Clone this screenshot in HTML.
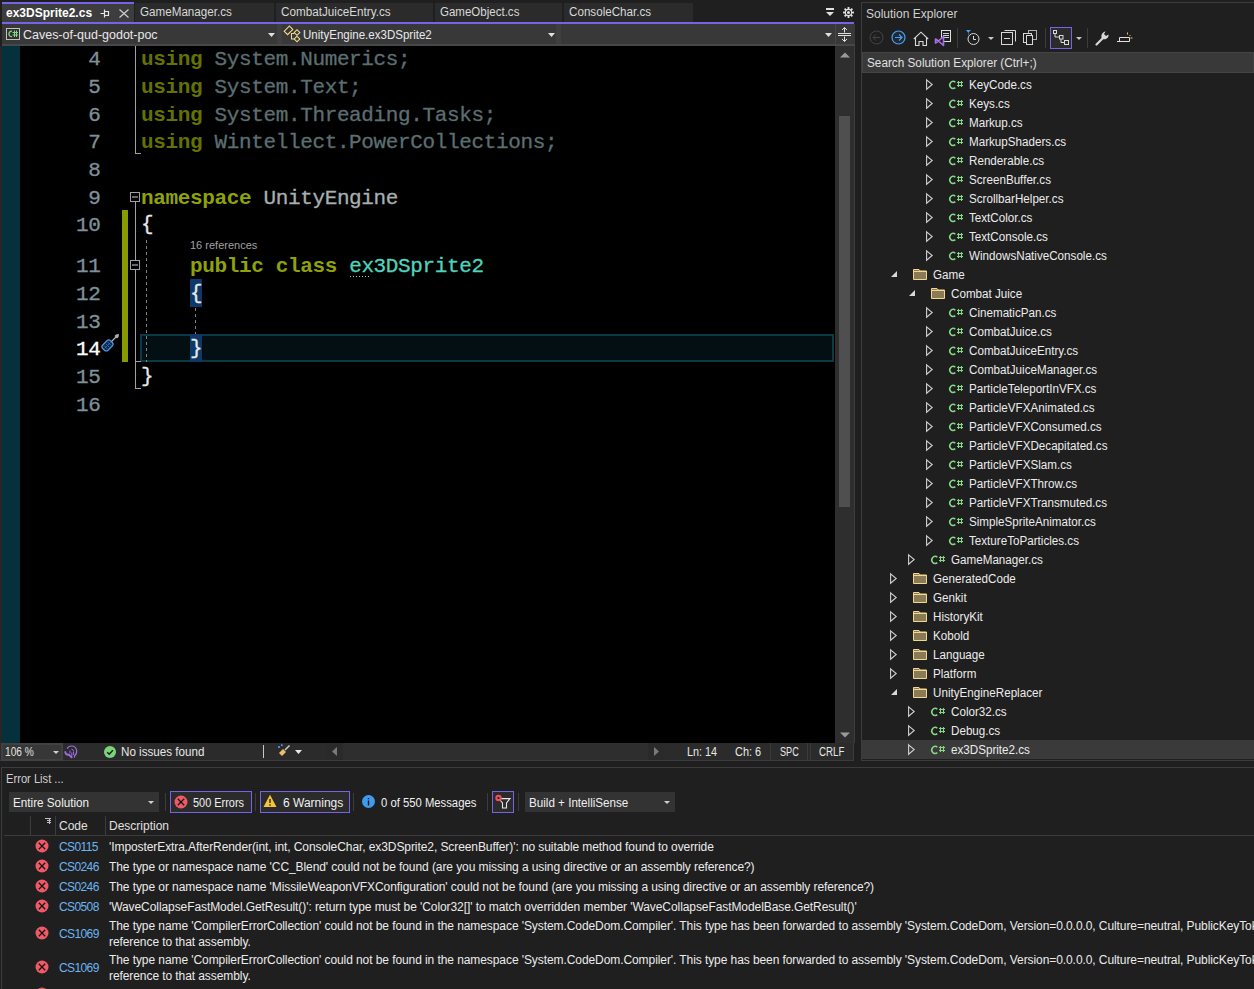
<!DOCTYPE html>
<html><head><meta charset="utf-8"><style>
*{margin:0;padding:0;box-sizing:border-box}
html,body{width:1254px;height:989px;overflow:hidden}
body{background:#1f1f1f;position:relative;font-family:"Liberation Sans",sans-serif;font-size:12px;color:#dcdcdc}
.a{position:absolute}
.t{position:absolute;white-space:pre;line-height:14px}
.code{position:absolute;-webkit-text-stroke:0.3px currentColor;white-space:pre;font-family:"Liberation Mono",monospace;font-size:21px;letter-spacing:-0.36px;line-height:27.67px;height:27.67px}
.ln{position:absolute;-webkit-text-stroke:0.3px currentColor;white-space:pre;font-family:"Liberation Mono",monospace;font-size:21px;letter-spacing:-0.36px;line-height:27.67px;text-align:right;width:50px;color:#7f9099}
.kw{color:#8fa20a;font-weight:bold;-webkit-text-stroke:0}
.kwf{color:#647200;font-weight:bold;-webkit-text-stroke:0}
.idf{color:#5b6f72}
.cls{color:#4fd4bd}
.br{color:#e8e8e8;position:relative;top:-1px}
.se{position:absolute;white-space:pre;color:#ececec;line-height:19px;height:19px;transform:scaleX(0.97);transform-origin:0 0}
svg{position:absolute;overflow:visible}
</style></head><body>
<div class="a" style="left:0;top:0;width:858px;height:22px;background:#1f1f1f"></div>
<div class="a" style="left:2px;top:2px;width:132px;height:20px;background:#3d3d3d;border-top:2px solid #7563e8"></div>
<div class="t" style="left:6px;top:6px;font-weight:bold;color:#ffffff">ex3DSprite2.cs</div>
<svg style="left:100px;top:9px" width="10" height="9" viewBox="0 0 10 9"><path d="M0.5 4.5H4.5M4.5 0.5V8.5M4.5 2.5H8.5V6.5H4.5" fill="none" stroke="#e8e8e8" stroke-width="1.2"/></svg>
<svg style="left:119px;top:8.5px" width="10" height="9" viewBox="0 0 10 9"><path d="M0.5 0.5L9.5 8.5M9.5 0.5L0.5 8.5" fill="none" stroke="#d0d0d0" stroke-width="1.2"/></svg>
<div class="a" style="left:135px;top:3px;width:139px;height:19px;background:#2b2b2b"></div>
<div class="t" style="left:140px;top:5px;color:#d8d8d8;transform:scaleX(0.97);transform-origin:0 0">GameManager.cs</div>
<div class="a" style="left:276px;top:3px;width:157px;height:19px;background:#2b2b2b"></div>
<div class="t" style="left:281px;top:5px;color:#d8d8d8;transform:scaleX(0.975);transform-origin:0 0">CombatJuiceEntry.cs</div>
<div class="a" style="left:435px;top:3px;width:127px;height:19px;background:#2b2b2b"></div>
<div class="t" style="left:440px;top:5px;color:#d8d8d8;transform:scaleX(0.96);transform-origin:0 0">GameObject.cs</div>
<div class="a" style="left:564px;top:3px;width:129px;height:19px;background:#2b2b2b"></div>
<div class="t" style="left:569px;top:5px;color:#d8d8d8;transform:scaleX(0.97);transform-origin:0 0">ConsoleChar.cs</div>
<svg style="left:825px;top:7px" width="11" height="11" viewBox="0 0 11 11"><rect x="1" y="1" width="8" height="2" fill="#e0e0e0"/><path d="M1 5H9L5 9Z" fill="#e0e0e0"/></svg>
<svg style="left:843px;top:7px" width="11" height="11" viewBox="0 0 12 12"><g fill="#e0e0e0"><circle cx="6" cy="6" r="4"/><rect x="5" y="0" width="2" height="12"/><rect x="0" y="5" width="12" height="2"/><rect x="5" y="0" width="2" height="12" transform="rotate(45 6 6)"/><rect x="5" y="0" width="2" height="12" transform="rotate(-45 6 6)"/></g><circle cx="6" cy="6" r="2.2" fill="none" stroke="#1f1f1f" stroke-width="1.1"/></svg>
<div class="a" style="left:2px;top:22px;width:852px;height:2px;background:#7563e8"></div>
<div class="a" style="left:0;top:24px;width:858px;height:22px;background:#1f1f1f"></div>
<div class="a" style="left:2px;top:24px;width:853px;height:22px;background:#383838;border-bottom:2px solid #474747"></div>
<div class="a" style="left:277px;top:24px;width:5px;height:20px;background:#3f3f3f"></div>
<div class="a" style="left:556px;top:24px;width:5px;height:20px;background:#3f3f3f"></div>
<div class="a" style="left:835px;top:24px;width:1px;height:20px;background:#474747"></div>
<svg style="left:6px;top:28px" width="14" height="12" viewBox="0 0 14 12"><rect x="0.5" y="0.5" width="13" height="11" fill="#303030" stroke="#c0c0c0" stroke-width="1"/><path d="M6 3.2A2.4 2.8 0 1 0 6 8.6" fill="none" stroke="#86d886" stroke-width="1.3"/><path d="M6.5 4.5H12M6.5 7H12M8.5 2.5V9M10.5 2.5V9" stroke="#86d886" stroke-width="1"/></svg>
<div class="t" style="left:23px;top:28px;color:#e8e8e8;transform:scaleX(1.04);transform-origin:0 0">Caves-of-qud-godot-poc</div>
<svg style="left:268px;top:33px" width="7" height="4" viewBox="0 0 7 4"><path d="M0 0H7L3.5 4Z" fill="#e0e0e0"/></svg>
<svg style="left:282px;top:24px" width="18" height="20" viewBox="0 0 18 20"><g fill="none" stroke="#f0d890" stroke-width="1.1"><g transform="rotate(-45 6.5 6.3)"><rect x="2.8" y="3.9" width="7.4" height="4.8" fill="#3a3636"/></g><g transform="rotate(45 15 8.5)"><rect x="13" y="6.5" width="4" height="4"/></g><g transform="rotate(45 15 15)"><rect x="13" y="13" width="4" height="4"/></g><path d="M9.5 9V15H12.3M9.5 9.5H12.3"/></g></svg>
<div class="t" style="left:303px;top:28px;color:#e8e8e8;transform:scaleX(0.96);transform-origin:0 0">UnityEngine.ex3DSprite2</div>
<svg style="left:548px;top:33px" width="7" height="4" viewBox="0 0 7 4"><path d="M0 0H7L3.5 4Z" fill="#e0e0e0"/></svg>
<svg style="left:825px;top:33px" width="7" height="4" viewBox="0 0 7 4"><path d="M0 0H7L3.5 4Z" fill="#e0e0e0"/></svg>
<svg style="left:838px;top:27px" width="13" height="15" viewBox="0 0 13 15"><g fill="none" stroke="#e0e0e0" stroke-width="1"><path d="M0 6.5H13M0 8.5H13M6.5 0.5V5.5M6.5 9.5V14.5M4 3L6.5 0.5L9 3M4 12L6.5 14.5L9 12"/></g></svg>
<div class="a" style="left:0;top:46px;width:835px;height:697px;background:#000000"></div>
<div class="a" style="left:0;top:46px;width:2px;height:697px;background:#262626"></div>
<div class="a" style="left:2px;top:46px;width:18px;height:697px;background:#05313d"></div>
<div class="a" style="left:122px;top:210.22px;width:6px;height:151.78px;background:#879a00"></div>
<div class="a" style="left:140px;top:334px;width:694px;height:28px;background:#040f13;border:2px solid #0b3a46"></div>
<div class="a" style="left:190px;top:279px;width:12px;height:27.5px;background:#0e3868"></div>
<div class="a" style="left:190px;top:334.20px;width:12px;height:27.67px;background:#0e3868"></div>
<svg style="left:130px;top:192px" width="10" height="10" viewBox="0 0 10 10"><rect x="0.5" y="0.5" width="9" height="9" fill="#000" stroke="#a0a0a0" stroke-width="1"/><path d="M2 5H8" stroke="#d0d0d0" stroke-width="1"/></svg>
<div class="a" style="left:135px;top:202px;width:1px;height:187px;background:#a0a0a0"></div>
<div class="a" style="left:135px;top:388px;width:6px;height:1px;background:#a0a0a0"></div>
<svg style="left:130px;top:260px" width="10" height="10" viewBox="0 0 10 10"><rect x="0.5" y="0.5" width="9" height="9" fill="#000" stroke="#a0a0a0" stroke-width="1"/><path d="M2 5H8" stroke="#d0d0d0" stroke-width="1"/></svg>
<div class="a" style="left:135px;top:361px;width:6px;height:1px;background:#a0a0a0"></div>
<div class="a" style="left:135px;top:46px;width:1px;height:108px;background:#a0a0a0"></div>
<div class="a" style="left:135px;top:153px;width:6px;height:1px;background:#a0a0a0"></div>
<div class="a" style="left:146px;top:240px;width:1px;height:122px;background:repeating-linear-gradient(#808080 0 3px,transparent 3px 6px)"></div>
<div class="a" style="left:195px;top:308px;width:1px;height:26px;background:repeating-linear-gradient(#808080 0 3px,transparent 3px 6px)"></div>
<div class="ln" style="left:50.5px;top:46.30px;color:#7f9099">4</div>
<div class="code" style="left:141px;top:46.30px"><span class="kwf">using</span><span class="idf"> System.Numerics;</span></div>
<div class="ln" style="left:50.5px;top:73.97px;color:#7f9099">5</div>
<div class="code" style="left:141px;top:73.97px"><span class="kwf">using</span><span class="idf"> System.Text;</span></div>
<div class="ln" style="left:50.5px;top:101.64px;color:#7f9099">6</div>
<div class="code" style="left:141px;top:101.64px"><span class="kwf">using</span><span class="idf"> System.Threading.Tasks;</span></div>
<div class="ln" style="left:50.5px;top:129.31px;color:#7f9099">7</div>
<div class="code" style="left:141px;top:129.31px"><span class="kwf">using</span><span class="idf"> Wintellect.PowerCollections;</span></div>
<div class="ln" style="left:50.5px;top:156.98px;color:#7f9099">8</div>
<div class="ln" style="left:50.5px;top:184.65px;color:#7f9099">9</div>
<div class="code" style="left:141px;top:184.65px"><span class="kw">namespace</span><span style="color:#a6b0b0"> UnityEngine</span></div>
<div class="ln" style="left:50.5px;top:212.32px;color:#7f9099">10</div>
<div class="code" style="left:141px;top:212.32px"><span class="br">{</span></div>
<div class="ln" style="left:50.5px;top:253.29px;color:#7f9099">11</div>
<div class="code" style="left:141px;top:253.29px">    <span class="kw">public</span> <span class="kw">class</span> <span class="cls">ex3DSprite2</span></div>
<div class="ln" style="left:50.5px;top:280.96px;color:#7f9099">12</div>
<div class="code" style="left:141px;top:280.96px">    <span class="br">{</span></div>
<div class="ln" style="left:50.5px;top:308.63px;color:#7f9099">13</div>
<div class="ln" style="left:50.5px;top:336.30px;color:#ffffff">14</div>
<div class="code" style="left:141px;top:336.30px">    <span class="br">}</span></div>
<div class="ln" style="left:50.5px;top:363.97px;color:#7f9099">15</div>
<div class="code" style="left:141px;top:363.97px"><span class="br">}</span></div>
<div class="ln" style="left:50.5px;top:391.64px;color:#7f9099">16</div>
<div class="t" style="left:190px;top:238px;font-size:11px;color:#a0a0a0">16 references</div>
<div class="a" style="left:350px;top:276px;width:20px;height:1px;background:repeating-linear-gradient(90deg,#c0c0c0 0 1px,transparent 1px 3px)"></div>
<svg style="left:100px;top:332px" width="21" height="21" viewBox="0 0 21 21"><path d="M11 10L17 4" stroke="#b0b0b0" stroke-width="1.3"/><path d="M16 2.5L19 2L18.5 5L17 6.5L14.5 4Z" fill="#b0b0b0"/><g transform="rotate(-45 7.5 13.5)"><rect x="2" y="9.8" width="11" height="7.4" rx="2.5" fill="#0c2440" stroke="#4f98e8" stroke-width="1.2"/><path d="M5 11V16M7.5 11V16M10 11V16M3.5 13.5H12" stroke="#2f6fb8" stroke-width="0.8"/></g></svg>
<div class="a" style="left:835px;top:46px;width:20px;height:697px;background:#2e2e2e;border-right:1px solid #3d3d3d"></div>
<svg style="left:840px;top:51.5px" width="10" height="6" viewBox="0 0 10 6"><path d="M0 5.5L5 0.5L10 5.5Z" fill="#9a9a9a"/></svg>
<svg style="left:840px;top:732px" width="10" height="6" viewBox="0 0 10 6"><path d="M0 0.5L5 5.5L10 0.5Z" fill="#9a9a9a"/></svg>
<div class="a" style="left:839px;top:116px;width:11px;height:391px;background:#4f4f4f"></div>
<div class="a" style="left:0;top:743px;width:854px;height:18px;background:#2b2b2b;border-bottom:1px solid #3b3b3b"></div>
<div class="a" style="left:1px;top:743px;width:62px;height:18px;background:#373737;border:2px solid #414141"></div>
<div class="t" style="left:5px;top:745px;color:#e0e0e0;transform:scaleX(0.85);transform-origin:0 0">106 %</div>
<svg style="left:53px;top:751px" width="6" height="3" viewBox="0 0 6 3"><path d="M0 0H6L3 3Z" fill="#d0d0d0"/></svg>
<svg style="left:64px;top:745px" width="14" height="14" viewBox="0 0 14 14"><g fill="none" stroke="#9d6ce0"><path d="M10.5 12.8V10.8C12.3 9.5 13 7.5 12.6 5.3C12.1 2.6 10 1 7.6 1C5.6 1 3.9 2 3.2 3.8" stroke-width="1.2"/><path d="M7.5 4.2A2.2 2.2 0 0 1 9.6 6.2M6 5.5V8.2M9.6 6.5V10M7.8 7.5V12.8" stroke-width="1"/><path d="M1.4 6.2C0.9 8.6 2.8 10.2 4.9 9.6L8 12.8" stroke-width="1.9"/></g></svg>
<svg style="left:104px;top:745.5px" width="12" height="12" viewBox="0 0 12 12"><circle cx="6" cy="6" r="6" fill="#7ad47a"/><path d="M3.2 6.2L5.2 8.2L8.8 4.2" fill="none" stroke="#1a1a1a" stroke-width="1.5"/></svg>
<div class="t" style="left:121px;top:745px;color:#e8e8e8;transform:scaleX(0.97);transform-origin:0 0">No issues found</div>
<div class="a" style="left:263px;top:745px;width:1px;height:13px;background:#c8c8c8"></div>
<svg style="left:277px;top:744px" width="14" height="14" viewBox="0 0 14 14"><path d="M8 6L12.5 1.5" stroke="#c8c8c8" stroke-width="1.6"/><path d="M2 9L6 5L9 8L5 12Z" fill="#e8c070"/><path d="M1 3H3M2 2V4M4 1.2H5.6M4.8 0.4V2" stroke="#60a8f0" stroke-width="1"/></svg>
<svg style="left:295px;top:750px" width="7" height="4" viewBox="0 0 7 4"><path d="M0 0H7L3.5 4Z" fill="#e8e8e8"/></svg>
<div class="a" style="left:326px;top:743px;width:339px;height:17px;background:#2e2e2e"></div>
<div class="a" style="left:326px;top:743px;width:17px;height:17px;background:#2a2a2a"></div>
<svg style="left:332px;top:747px" width="5" height="9" viewBox="0 0 5 9"><path d="M5 0V9L0 4.5Z" fill="#7a7a7a"/></svg>
<div class="a" style="left:648px;top:743px;width:17px;height:17px;background:#2a2a2a"></div>
<svg style="left:654px;top:747px" width="5" height="9" viewBox="0 0 5 9"><path d="M0 0V9L5 4.5Z" fill="#7a7a7a"/></svg>
<div class="t" style="left:687px;top:745px;color:#e8e8e8;transform:scaleX(0.9);transform-origin:0 0">Ln: 14</div>
<div class="t" style="left:735px;top:745px;color:#e8e8e8;transform:scaleX(0.91);transform-origin:0 0">Ch: 6</div>
<div class="a" style="left:770px;top:743px;width:38px;height:17px;border-left:1px solid #3b3b3b;border-right:1px solid #3b3b3b"></div>
<div class="t" style="left:780px;top:745px;color:#e8e8e8;transform:scaleX(0.76);transform-origin:0 0">SPC</div>
<div class="a" style="left:810px;top:743px;width:44px;height:17px;border-left:1px solid #3b3b3b;border-right:1px solid #3b3b3b"></div>
<div class="t" style="left:819px;top:745px;color:#e8e8e8;transform:scaleX(0.81);transform-origin:0 0">CRLF</div>
<div class="a" style="left:861px;top:2px;width:393px;height:759px;background:#1f1f1f;border-left:1px solid #3c3c3c;border-top:1px solid #3c3c3c;border-bottom:1px solid #3c3c3c"></div>
<div class="t" style="left:866px;top:7px;color:#d0d0d0">Solution Explorer</div>
<svg style="left:869px;top:30px" width="15" height="15" viewBox="0 0 15 15"><circle cx="7.5" cy="7.5" r="6.5" fill="none" stroke="#444" stroke-width="1"/><path d="M11 7.5H4M7 4.5L4 7.5L7 10.5" fill="none" stroke="#444" stroke-width="1"/></svg>
<svg style="left:891px;top:30px" width="15" height="15" viewBox="0 0 15 15"><circle cx="7.5" cy="7.5" r="6.5" fill="#202a36" stroke="#4aa0f0" stroke-width="1.2"/><path d="M4 7.5H11M8 4.5L11 7.5L8 10.5" fill="none" stroke="#4aa0f0" stroke-width="1.2"/></svg>
<svg style="left:913px;top:31px" width="16" height="15" viewBox="0 0 16 15"><path d="M0.8 8L8 1.2L15.2 8M2.5 6.5V14.5H6V10.5H10V14.5H13.5V6.5" fill="none" stroke="#d8d8d8" stroke-width="1.1"/></svg>
<svg style="left:934px;top:30px" width="18" height="17" viewBox="0 0 18 17"><rect x="7.5" y="0.5" width="9" height="11" fill="#1f1f1f" stroke="#e0e0e0"/><path d="M9 3.5H15M9 5.5H15M9 7.5H15" stroke="#d0d0d0" stroke-width="1"/><path d="M1.5 9L4.5 11L9.5 6.5V15.5L4.5 11L1.5 13Z" fill="#1f1f1f" stroke="#a86ee6" stroke-width="1.6" stroke-linejoin="round"/></svg>
<div class="a" style="left:957px;top:28px;width:1px;height:20px;background:#3c3c3c"></div>
<svg style="left:965px;top:29px" width="16" height="17" viewBox="0 0 16 17"><path d="M1 1H6L3.5 3.5V6L3 6V3.5Z" fill="#4aa0f0"/><circle cx="8.5" cy="10" r="5.5" fill="none" stroke="#d8d8d8" stroke-width="1"/><path d="M8.5 7V10.5H11" fill="none" stroke="#d8d8d8"/></svg>
<svg style="left:988px;top:37px" width="6" height="3" viewBox="0 0 6 3"><path d="M0 0H6L3 3Z" fill="#c8c8c8"/></svg>
<svg style="left:1001px;top:30px" width="15" height="15" viewBox="0 0 15 15"><path d="M3.5 0.5H14.5V11.5" fill="none" stroke="#d8d8d8"/><rect x="0.5" y="2.5" width="11" height="12" fill="none" stroke="#d8d8d8"/><path d="M3 8.5H9" stroke="#d8d8d8"/></svg>
<svg style="left:1023px;top:30px" width="15" height="15" viewBox="0 0 15 15"><rect x="5.5" y="0.5" width="8" height="9" fill="none" stroke="#b0b0b0"/><rect x="0.5" y="3.5" width="8" height="9" fill="#1f1f1f" stroke="#d8d8d8"/><rect x="3.5" y="5.5" width="6" height="9" fill="#1f1f1f" stroke="#d8d8d8"/></svg>
<div class="a" style="left:1045px;top:28px;width:1px;height:20px;background:#3c3c3c"></div>
<div class="a" style="left:1050px;top:27px;width:22px;height:22px;background:#2b2b2b;border:1px solid #7563e8"></div>
<svg style="left:1053px;top:30px" width="16" height="16" viewBox="0 0 16 16"><g fill="none" stroke="#d8d8d8"><rect x="0.5" y="0.5" width="3" height="3"/><rect x="6.5" y="5.5" width="3.5" height="3.5"/><rect x="11.5" y="10.5" width="4" height="4"/><path d="M2 4V7H6.5M8 9V12.5H11.5"/></g></svg>
<svg style="left:1076px;top:37px" width="6" height="3" viewBox="0 0 6 3"><path d="M0 0H6L3 3Z" fill="#c8c8c8"/></svg>
<div class="a" style="left:1087px;top:28px;width:1px;height:20px;background:#3c3c3c"></div>
<svg style="left:1095px;top:30px" width="16" height="16" viewBox="0 0 16 16"><path d="M1.5 14.5L8 8" stroke="#d8d8d8" stroke-width="2.2" stroke-linecap="round"/><path d="M7 8.5C5.5 6 7 2 10.5 1.5L9 4L11 6L13.5 4.5C14 8 10.5 10 8 9Z" fill="#d8d8d8"/></svg>
<svg style="left:1117px;top:31px" width="17" height="13" viewBox="0 0 17 13"><path d="M0 10.5H12.5V6.5H2.5V10.5" fill="none" stroke="#e0e0e0" stroke-width="1"/><path d="M10.5 1.5V3.5M13.5 4L12.5 5M15.5 7H13.5" stroke="#f0c860" stroke-width="1"/></svg>
<div class="a" style="left:862px;top:52px;width:392px;height:21px;background:#393939;border:1px solid #444444"></div>
<div class="t" style="left:867px;top:56px;color:#e0e0e0;transform:scaleX(0.98);transform-origin:0 0">Search Solution Explorer (Ctrl+;)</div>
<svg style="left:926px;top:79px" width="7" height="11" viewBox="0 0 7 11"><path d="M0.6 0.8L6.2 5.5L0.6 10.2Z" fill="none" stroke="#d0d0d0" stroke-width="1.1"/></svg>
<svg style="left:949px;top:80px" width="15" height="10" viewBox="0 0 15 10"><path d="M6.3 2.2A3.3 3.6 0 1 0 6.3 7.6" fill="none" stroke="#86d886" stroke-width="1.5"/><path d="M8 2.5H14M8 5.5H14M9.5 1V7M12.5 1V7" stroke="#86d886" stroke-width="1.1"/></svg>
<div class="se" style="left:969px;top:76px">KeyCode.cs</div>
<svg style="left:926px;top:98px" width="7" height="11" viewBox="0 0 7 11"><path d="M0.6 0.8L6.2 5.5L0.6 10.2Z" fill="none" stroke="#d0d0d0" stroke-width="1.1"/></svg>
<svg style="left:949px;top:99px" width="15" height="10" viewBox="0 0 15 10"><path d="M6.3 2.2A3.3 3.6 0 1 0 6.3 7.6" fill="none" stroke="#86d886" stroke-width="1.5"/><path d="M8 2.5H14M8 5.5H14M9.5 1V7M12.5 1V7" stroke="#86d886" stroke-width="1.1"/></svg>
<div class="se" style="left:969px;top:95px">Keys.cs</div>
<svg style="left:926px;top:117px" width="7" height="11" viewBox="0 0 7 11"><path d="M0.6 0.8L6.2 5.5L0.6 10.2Z" fill="none" stroke="#d0d0d0" stroke-width="1.1"/></svg>
<svg style="left:949px;top:118px" width="15" height="10" viewBox="0 0 15 10"><path d="M6.3 2.2A3.3 3.6 0 1 0 6.3 7.6" fill="none" stroke="#86d886" stroke-width="1.5"/><path d="M8 2.5H14M8 5.5H14M9.5 1V7M12.5 1V7" stroke="#86d886" stroke-width="1.1"/></svg>
<div class="se" style="left:969px;top:114px">Markup.cs</div>
<svg style="left:926px;top:136px" width="7" height="11" viewBox="0 0 7 11"><path d="M0.6 0.8L6.2 5.5L0.6 10.2Z" fill="none" stroke="#d0d0d0" stroke-width="1.1"/></svg>
<svg style="left:949px;top:137px" width="15" height="10" viewBox="0 0 15 10"><path d="M6.3 2.2A3.3 3.6 0 1 0 6.3 7.6" fill="none" stroke="#86d886" stroke-width="1.5"/><path d="M8 2.5H14M8 5.5H14M9.5 1V7M12.5 1V7" stroke="#86d886" stroke-width="1.1"/></svg>
<div class="se" style="left:969px;top:133px">MarkupShaders.cs</div>
<svg style="left:926px;top:155px" width="7" height="11" viewBox="0 0 7 11"><path d="M0.6 0.8L6.2 5.5L0.6 10.2Z" fill="none" stroke="#d0d0d0" stroke-width="1.1"/></svg>
<svg style="left:949px;top:156px" width="15" height="10" viewBox="0 0 15 10"><path d="M6.3 2.2A3.3 3.6 0 1 0 6.3 7.6" fill="none" stroke="#86d886" stroke-width="1.5"/><path d="M8 2.5H14M8 5.5H14M9.5 1V7M12.5 1V7" stroke="#86d886" stroke-width="1.1"/></svg>
<div class="se" style="left:969px;top:152px">Renderable.cs</div>
<svg style="left:926px;top:174px" width="7" height="11" viewBox="0 0 7 11"><path d="M0.6 0.8L6.2 5.5L0.6 10.2Z" fill="none" stroke="#d0d0d0" stroke-width="1.1"/></svg>
<svg style="left:949px;top:175px" width="15" height="10" viewBox="0 0 15 10"><path d="M6.3 2.2A3.3 3.6 0 1 0 6.3 7.6" fill="none" stroke="#86d886" stroke-width="1.5"/><path d="M8 2.5H14M8 5.5H14M9.5 1V7M12.5 1V7" stroke="#86d886" stroke-width="1.1"/></svg>
<div class="se" style="left:969px;top:171px">ScreenBuffer.cs</div>
<svg style="left:926px;top:193px" width="7" height="11" viewBox="0 0 7 11"><path d="M0.6 0.8L6.2 5.5L0.6 10.2Z" fill="none" stroke="#d0d0d0" stroke-width="1.1"/></svg>
<svg style="left:949px;top:194px" width="15" height="10" viewBox="0 0 15 10"><path d="M6.3 2.2A3.3 3.6 0 1 0 6.3 7.6" fill="none" stroke="#86d886" stroke-width="1.5"/><path d="M8 2.5H14M8 5.5H14M9.5 1V7M12.5 1V7" stroke="#86d886" stroke-width="1.1"/></svg>
<div class="se" style="left:969px;top:190px">ScrollbarHelper.cs</div>
<svg style="left:926px;top:212px" width="7" height="11" viewBox="0 0 7 11"><path d="M0.6 0.8L6.2 5.5L0.6 10.2Z" fill="none" stroke="#d0d0d0" stroke-width="1.1"/></svg>
<svg style="left:949px;top:213px" width="15" height="10" viewBox="0 0 15 10"><path d="M6.3 2.2A3.3 3.6 0 1 0 6.3 7.6" fill="none" stroke="#86d886" stroke-width="1.5"/><path d="M8 2.5H14M8 5.5H14M9.5 1V7M12.5 1V7" stroke="#86d886" stroke-width="1.1"/></svg>
<div class="se" style="left:969px;top:209px">TextColor.cs</div>
<svg style="left:926px;top:231px" width="7" height="11" viewBox="0 0 7 11"><path d="M0.6 0.8L6.2 5.5L0.6 10.2Z" fill="none" stroke="#d0d0d0" stroke-width="1.1"/></svg>
<svg style="left:949px;top:232px" width="15" height="10" viewBox="0 0 15 10"><path d="M6.3 2.2A3.3 3.6 0 1 0 6.3 7.6" fill="none" stroke="#86d886" stroke-width="1.5"/><path d="M8 2.5H14M8 5.5H14M9.5 1V7M12.5 1V7" stroke="#86d886" stroke-width="1.1"/></svg>
<div class="se" style="left:969px;top:228px">TextConsole.cs</div>
<svg style="left:926px;top:250px" width="7" height="11" viewBox="0 0 7 11"><path d="M0.6 0.8L6.2 5.5L0.6 10.2Z" fill="none" stroke="#d0d0d0" stroke-width="1.1"/></svg>
<svg style="left:949px;top:251px" width="15" height="10" viewBox="0 0 15 10"><path d="M6.3 2.2A3.3 3.6 0 1 0 6.3 7.6" fill="none" stroke="#86d886" stroke-width="1.5"/><path d="M8 2.5H14M8 5.5H14M9.5 1V7M12.5 1V7" stroke="#86d886" stroke-width="1.1"/></svg>
<div class="se" style="left:969px;top:247px">WindowsNativeConsole.cs</div>
<svg style="left:891px;top:271px" width="6" height="6" viewBox="0 0 6 6"><path d="M6 0V6H0Z" fill="#d8d8d8"/></svg>
<svg style="left:913px;top:269px" width="14" height="11" viewBox="0 0 14 11"><path d="M0.5 0.5H6L7 2H13.5V10.5H0.5Z" fill="#8a7a56" stroke="#f2d98e" stroke-width="1"/><path d="M0.5 2.5H13.5" stroke="#f2d98e" stroke-width="1"/></svg>
<div class="se" style="left:933px;top:266px">Game</div>
<svg style="left:909px;top:290px" width="6" height="6" viewBox="0 0 6 6"><path d="M6 0V6H0Z" fill="#d8d8d8"/></svg>
<svg style="left:931px;top:288px" width="14" height="11" viewBox="0 0 14 11"><path d="M0.5 0.5H6L7 2H13.5V10.5H0.5Z" fill="#8a7a56" stroke="#f2d98e" stroke-width="1"/><path d="M0.5 2.5H13.5" stroke="#f2d98e" stroke-width="1"/></svg>
<div class="se" style="left:951px;top:285px">Combat Juice</div>
<svg style="left:926px;top:307px" width="7" height="11" viewBox="0 0 7 11"><path d="M0.6 0.8L6.2 5.5L0.6 10.2Z" fill="none" stroke="#d0d0d0" stroke-width="1.1"/></svg>
<svg style="left:949px;top:308px" width="15" height="10" viewBox="0 0 15 10"><path d="M6.3 2.2A3.3 3.6 0 1 0 6.3 7.6" fill="none" stroke="#86d886" stroke-width="1.5"/><path d="M8 2.5H14M8 5.5H14M9.5 1V7M12.5 1V7" stroke="#86d886" stroke-width="1.1"/></svg>
<div class="se" style="left:969px;top:304px">CinematicPan.cs</div>
<svg style="left:926px;top:326px" width="7" height="11" viewBox="0 0 7 11"><path d="M0.6 0.8L6.2 5.5L0.6 10.2Z" fill="none" stroke="#d0d0d0" stroke-width="1.1"/></svg>
<svg style="left:949px;top:327px" width="15" height="10" viewBox="0 0 15 10"><path d="M6.3 2.2A3.3 3.6 0 1 0 6.3 7.6" fill="none" stroke="#86d886" stroke-width="1.5"/><path d="M8 2.5H14M8 5.5H14M9.5 1V7M12.5 1V7" stroke="#86d886" stroke-width="1.1"/></svg>
<div class="se" style="left:969px;top:323px">CombatJuice.cs</div>
<svg style="left:926px;top:345px" width="7" height="11" viewBox="0 0 7 11"><path d="M0.6 0.8L6.2 5.5L0.6 10.2Z" fill="none" stroke="#d0d0d0" stroke-width="1.1"/></svg>
<svg style="left:949px;top:346px" width="15" height="10" viewBox="0 0 15 10"><path d="M6.3 2.2A3.3 3.6 0 1 0 6.3 7.6" fill="none" stroke="#86d886" stroke-width="1.5"/><path d="M8 2.5H14M8 5.5H14M9.5 1V7M12.5 1V7" stroke="#86d886" stroke-width="1.1"/></svg>
<div class="se" style="left:969px;top:342px">CombatJuiceEntry.cs</div>
<svg style="left:926px;top:364px" width="7" height="11" viewBox="0 0 7 11"><path d="M0.6 0.8L6.2 5.5L0.6 10.2Z" fill="none" stroke="#d0d0d0" stroke-width="1.1"/></svg>
<svg style="left:949px;top:365px" width="15" height="10" viewBox="0 0 15 10"><path d="M6.3 2.2A3.3 3.6 0 1 0 6.3 7.6" fill="none" stroke="#86d886" stroke-width="1.5"/><path d="M8 2.5H14M8 5.5H14M9.5 1V7M12.5 1V7" stroke="#86d886" stroke-width="1.1"/></svg>
<div class="se" style="left:969px;top:361px">CombatJuiceManager.cs</div>
<svg style="left:926px;top:383px" width="7" height="11" viewBox="0 0 7 11"><path d="M0.6 0.8L6.2 5.5L0.6 10.2Z" fill="none" stroke="#d0d0d0" stroke-width="1.1"/></svg>
<svg style="left:949px;top:384px" width="15" height="10" viewBox="0 0 15 10"><path d="M6.3 2.2A3.3 3.6 0 1 0 6.3 7.6" fill="none" stroke="#86d886" stroke-width="1.5"/><path d="M8 2.5H14M8 5.5H14M9.5 1V7M12.5 1V7" stroke="#86d886" stroke-width="1.1"/></svg>
<div class="se" style="left:969px;top:380px">ParticleTeleportInVFX.cs</div>
<svg style="left:926px;top:402px" width="7" height="11" viewBox="0 0 7 11"><path d="M0.6 0.8L6.2 5.5L0.6 10.2Z" fill="none" stroke="#d0d0d0" stroke-width="1.1"/></svg>
<svg style="left:949px;top:403px" width="15" height="10" viewBox="0 0 15 10"><path d="M6.3 2.2A3.3 3.6 0 1 0 6.3 7.6" fill="none" stroke="#86d886" stroke-width="1.5"/><path d="M8 2.5H14M8 5.5H14M9.5 1V7M12.5 1V7" stroke="#86d886" stroke-width="1.1"/></svg>
<div class="se" style="left:969px;top:399px">ParticleVFXAnimated.cs</div>
<svg style="left:926px;top:421px" width="7" height="11" viewBox="0 0 7 11"><path d="M0.6 0.8L6.2 5.5L0.6 10.2Z" fill="none" stroke="#d0d0d0" stroke-width="1.1"/></svg>
<svg style="left:949px;top:422px" width="15" height="10" viewBox="0 0 15 10"><path d="M6.3 2.2A3.3 3.6 0 1 0 6.3 7.6" fill="none" stroke="#86d886" stroke-width="1.5"/><path d="M8 2.5H14M8 5.5H14M9.5 1V7M12.5 1V7" stroke="#86d886" stroke-width="1.1"/></svg>
<div class="se" style="left:969px;top:418px">ParticleVFXConsumed.cs</div>
<svg style="left:926px;top:440px" width="7" height="11" viewBox="0 0 7 11"><path d="M0.6 0.8L6.2 5.5L0.6 10.2Z" fill="none" stroke="#d0d0d0" stroke-width="1.1"/></svg>
<svg style="left:949px;top:441px" width="15" height="10" viewBox="0 0 15 10"><path d="M6.3 2.2A3.3 3.6 0 1 0 6.3 7.6" fill="none" stroke="#86d886" stroke-width="1.5"/><path d="M8 2.5H14M8 5.5H14M9.5 1V7M12.5 1V7" stroke="#86d886" stroke-width="1.1"/></svg>
<div class="se" style="left:969px;top:437px">ParticleVFXDecapitated.cs</div>
<svg style="left:926px;top:459px" width="7" height="11" viewBox="0 0 7 11"><path d="M0.6 0.8L6.2 5.5L0.6 10.2Z" fill="none" stroke="#d0d0d0" stroke-width="1.1"/></svg>
<svg style="left:949px;top:460px" width="15" height="10" viewBox="0 0 15 10"><path d="M6.3 2.2A3.3 3.6 0 1 0 6.3 7.6" fill="none" stroke="#86d886" stroke-width="1.5"/><path d="M8 2.5H14M8 5.5H14M9.5 1V7M12.5 1V7" stroke="#86d886" stroke-width="1.1"/></svg>
<div class="se" style="left:969px;top:456px">ParticleVFXSlam.cs</div>
<svg style="left:926px;top:478px" width="7" height="11" viewBox="0 0 7 11"><path d="M0.6 0.8L6.2 5.5L0.6 10.2Z" fill="none" stroke="#d0d0d0" stroke-width="1.1"/></svg>
<svg style="left:949px;top:479px" width="15" height="10" viewBox="0 0 15 10"><path d="M6.3 2.2A3.3 3.6 0 1 0 6.3 7.6" fill="none" stroke="#86d886" stroke-width="1.5"/><path d="M8 2.5H14M8 5.5H14M9.5 1V7M12.5 1V7" stroke="#86d886" stroke-width="1.1"/></svg>
<div class="se" style="left:969px;top:475px">ParticleVFXThrow.cs</div>
<svg style="left:926px;top:497px" width="7" height="11" viewBox="0 0 7 11"><path d="M0.6 0.8L6.2 5.5L0.6 10.2Z" fill="none" stroke="#d0d0d0" stroke-width="1.1"/></svg>
<svg style="left:949px;top:498px" width="15" height="10" viewBox="0 0 15 10"><path d="M6.3 2.2A3.3 3.6 0 1 0 6.3 7.6" fill="none" stroke="#86d886" stroke-width="1.5"/><path d="M8 2.5H14M8 5.5H14M9.5 1V7M12.5 1V7" stroke="#86d886" stroke-width="1.1"/></svg>
<div class="se" style="left:969px;top:494px">ParticleVFXTransmuted.cs</div>
<svg style="left:926px;top:516px" width="7" height="11" viewBox="0 0 7 11"><path d="M0.6 0.8L6.2 5.5L0.6 10.2Z" fill="none" stroke="#d0d0d0" stroke-width="1.1"/></svg>
<svg style="left:949px;top:517px" width="15" height="10" viewBox="0 0 15 10"><path d="M6.3 2.2A3.3 3.6 0 1 0 6.3 7.6" fill="none" stroke="#86d886" stroke-width="1.5"/><path d="M8 2.5H14M8 5.5H14M9.5 1V7M12.5 1V7" stroke="#86d886" stroke-width="1.1"/></svg>
<div class="se" style="left:969px;top:513px">SimpleSpriteAnimator.cs</div>
<svg style="left:926px;top:535px" width="7" height="11" viewBox="0 0 7 11"><path d="M0.6 0.8L6.2 5.5L0.6 10.2Z" fill="none" stroke="#d0d0d0" stroke-width="1.1"/></svg>
<svg style="left:949px;top:536px" width="15" height="10" viewBox="0 0 15 10"><path d="M6.3 2.2A3.3 3.6 0 1 0 6.3 7.6" fill="none" stroke="#86d886" stroke-width="1.5"/><path d="M8 2.5H14M8 5.5H14M9.5 1V7M12.5 1V7" stroke="#86d886" stroke-width="1.1"/></svg>
<div class="se" style="left:969px;top:532px">TextureToParticles.cs</div>
<svg style="left:908px;top:554px" width="7" height="11" viewBox="0 0 7 11"><path d="M0.6 0.8L6.2 5.5L0.6 10.2Z" fill="none" stroke="#d0d0d0" stroke-width="1.1"/></svg>
<svg style="left:931px;top:555px" width="15" height="10" viewBox="0 0 15 10"><path d="M6.3 2.2A3.3 3.6 0 1 0 6.3 7.6" fill="none" stroke="#86d886" stroke-width="1.5"/><path d="M8 2.5H14M8 5.5H14M9.5 1V7M12.5 1V7" stroke="#86d886" stroke-width="1.1"/></svg>
<div class="se" style="left:951px;top:551px">GameManager.cs</div>
<svg style="left:890px;top:573px" width="7" height="11" viewBox="0 0 7 11"><path d="M0.6 0.8L6.2 5.5L0.6 10.2Z" fill="none" stroke="#d0d0d0" stroke-width="1.1"/></svg>
<svg style="left:913px;top:573px" width="14" height="11" viewBox="0 0 14 11"><path d="M0.5 0.5H6L7 2H13.5V10.5H0.5Z" fill="#8a7a56" stroke="#f2d98e" stroke-width="1"/><path d="M0.5 2.5H13.5" stroke="#f2d98e" stroke-width="1"/></svg>
<div class="se" style="left:933px;top:570px">GeneratedCode</div>
<svg style="left:890px;top:592px" width="7" height="11" viewBox="0 0 7 11"><path d="M0.6 0.8L6.2 5.5L0.6 10.2Z" fill="none" stroke="#d0d0d0" stroke-width="1.1"/></svg>
<svg style="left:913px;top:592px" width="14" height="11" viewBox="0 0 14 11"><path d="M0.5 0.5H6L7 2H13.5V10.5H0.5Z" fill="#8a7a56" stroke="#f2d98e" stroke-width="1"/><path d="M0.5 2.5H13.5" stroke="#f2d98e" stroke-width="1"/></svg>
<div class="se" style="left:933px;top:589px">Genkit</div>
<svg style="left:890px;top:611px" width="7" height="11" viewBox="0 0 7 11"><path d="M0.6 0.8L6.2 5.5L0.6 10.2Z" fill="none" stroke="#d0d0d0" stroke-width="1.1"/></svg>
<svg style="left:913px;top:611px" width="14" height="11" viewBox="0 0 14 11"><path d="M0.5 0.5H6L7 2H13.5V10.5H0.5Z" fill="#8a7a56" stroke="#f2d98e" stroke-width="1"/><path d="M0.5 2.5H13.5" stroke="#f2d98e" stroke-width="1"/></svg>
<div class="se" style="left:933px;top:608px">HistoryKit</div>
<svg style="left:890px;top:630px" width="7" height="11" viewBox="0 0 7 11"><path d="M0.6 0.8L6.2 5.5L0.6 10.2Z" fill="none" stroke="#d0d0d0" stroke-width="1.1"/></svg>
<svg style="left:913px;top:630px" width="14" height="11" viewBox="0 0 14 11"><path d="M0.5 0.5H6L7 2H13.5V10.5H0.5Z" fill="#8a7a56" stroke="#f2d98e" stroke-width="1"/><path d="M0.5 2.5H13.5" stroke="#f2d98e" stroke-width="1"/></svg>
<div class="se" style="left:933px;top:627px">Kobold</div>
<svg style="left:890px;top:649px" width="7" height="11" viewBox="0 0 7 11"><path d="M0.6 0.8L6.2 5.5L0.6 10.2Z" fill="none" stroke="#d0d0d0" stroke-width="1.1"/></svg>
<svg style="left:913px;top:649px" width="14" height="11" viewBox="0 0 14 11"><path d="M0.5 0.5H6L7 2H13.5V10.5H0.5Z" fill="#8a7a56" stroke="#f2d98e" stroke-width="1"/><path d="M0.5 2.5H13.5" stroke="#f2d98e" stroke-width="1"/></svg>
<div class="se" style="left:933px;top:646px">Language</div>
<svg style="left:890px;top:668px" width="7" height="11" viewBox="0 0 7 11"><path d="M0.6 0.8L6.2 5.5L0.6 10.2Z" fill="none" stroke="#d0d0d0" stroke-width="1.1"/></svg>
<svg style="left:913px;top:668px" width="14" height="11" viewBox="0 0 14 11"><path d="M0.5 0.5H6L7 2H13.5V10.5H0.5Z" fill="#8a7a56" stroke="#f2d98e" stroke-width="1"/><path d="M0.5 2.5H13.5" stroke="#f2d98e" stroke-width="1"/></svg>
<div class="se" style="left:933px;top:665px">Platform</div>
<svg style="left:891px;top:689px" width="6" height="6" viewBox="0 0 6 6"><path d="M6 0V6H0Z" fill="#d8d8d8"/></svg>
<svg style="left:913px;top:687px" width="14" height="11" viewBox="0 0 14 11"><path d="M0.5 0.5H6L7 2H13.5V10.5H0.5Z" fill="#8a7a56" stroke="#f2d98e" stroke-width="1"/><path d="M0.5 2.5H13.5" stroke="#f2d98e" stroke-width="1"/></svg>
<div class="se" style="left:933px;top:684px">UnityEngineReplacer</div>
<svg style="left:908px;top:706px" width="7" height="11" viewBox="0 0 7 11"><path d="M0.6 0.8L6.2 5.5L0.6 10.2Z" fill="none" stroke="#d0d0d0" stroke-width="1.1"/></svg>
<svg style="left:931px;top:707px" width="15" height="10" viewBox="0 0 15 10"><path d="M6.3 2.2A3.3 3.6 0 1 0 6.3 7.6" fill="none" stroke="#86d886" stroke-width="1.5"/><path d="M8 2.5H14M8 5.5H14M9.5 1V7M12.5 1V7" stroke="#86d886" stroke-width="1.1"/></svg>
<div class="se" style="left:951px;top:703px">Color32.cs</div>
<svg style="left:908px;top:725px" width="7" height="11" viewBox="0 0 7 11"><path d="M0.6 0.8L6.2 5.5L0.6 10.2Z" fill="none" stroke="#d0d0d0" stroke-width="1.1"/></svg>
<svg style="left:931px;top:726px" width="15" height="10" viewBox="0 0 15 10"><path d="M6.3 2.2A3.3 3.6 0 1 0 6.3 7.6" fill="none" stroke="#86d886" stroke-width="1.5"/><path d="M8 2.5H14M8 5.5H14M9.5 1V7M12.5 1V7" stroke="#86d886" stroke-width="1.1"/></svg>
<div class="se" style="left:951px;top:722px">Debug.cs</div>
<div class="a" style="left:862px;top:740px;width:392px;height:19px;background:#3a3a3a"></div>
<svg style="left:908px;top:744px" width="7" height="11" viewBox="0 0 7 11"><path d="M0.6 0.8L6.2 5.5L0.6 10.2Z" fill="none" stroke="#d0d0d0" stroke-width="1.1"/></svg>
<svg style="left:931px;top:745px" width="15" height="10" viewBox="0 0 15 10"><path d="M6.3 2.2A3.3 3.6 0 1 0 6.3 7.6" fill="none" stroke="#86d886" stroke-width="1.5"/><path d="M8 2.5H14M8 5.5H14M9.5 1V7M12.5 1V7" stroke="#86d886" stroke-width="1.1"/></svg>
<div class="se" style="left:951px;top:741px">ex3DSprite2.cs</div>
<div class="a" style="left:1px;top:767px;width:1253px;height:222px;background:#1f1f1f;border-left:1px solid #3c3c3c;border-top:1px solid #3c3c3c"></div>
<div class="t" style="left:6px;top:772px;color:#d0d0d0;transform:scaleX(0.93);transform-origin:0 0">Error List ...</div>
<div class="a" style="left:9px;top:792px;width:150px;height:20px;background:#333333"></div>
<div class="t" style="left:13px;top:796px;color:#f0f0f0;transform:scaleX(0.975);transform-origin:0 0">Entire Solution</div>
<svg style="left:148px;top:801px" width="6" height="3" viewBox="0 0 6 3"><path d="M0 0H6L3 3Z" fill="#d0d0d0"/></svg>
<div class="a" style="left:165px;top:793px;width:1px;height:18px;background:#3c3c3c"></div>
<div class="a" style="left:170px;top:791px;width:82px;height:22px;background:#2b2b2b;border:1px solid #7563e8"></div>
<svg style="left:174px;top:795px" width="14" height="14" viewBox="0 0 14 14"><circle cx="7" cy="7" r="6.5" fill="#f05a66"/><path d="M3.8 3.8L10.2 10.2M10.2 3.8L3.8 10.2" stroke="#111111" stroke-width="1.3"/></svg>
<div class="t" style="left:193px;top:796px;color:#f0f0f0;transform:scaleX(0.91);transform-origin:0 0">500 Errors</div>
<div class="a" style="left:255px;top:793px;width:1px;height:18px;background:#3c3c3c"></div>
<div class="a" style="left:260px;top:791px;width:90px;height:22px;background:#2b2b2b;border:1px solid #7563e8"></div>
<svg style="left:263px;top:794px" width="14" height="14" viewBox="0 0 14 14"><path d="M7 0.8L13.5 13H0.5Z" fill="#f2c53d"/><path d="M7 5V9M7 10.3V11.8" stroke="#1a1a1a" stroke-width="1.3"/></svg>
<div class="t" style="left:283px;top:796px;color:#f0f0f0">6 Warnings</div>
<div class="a" style="left:353px;top:793px;width:1px;height:18px;background:#3c3c3c"></div>
<svg style="left:362px;top:795px" width="13" height="13" viewBox="0 0 13 13"><circle cx="6.5" cy="6.5" r="6.5" fill="#3d9cf0"/><path d="M6.5 5.5V10.5M6.5 3V4.3" stroke="#111111" stroke-width="1.4"/></svg>
<div class="t" style="left:381px;top:796px;color:#f0f0f0;transform:scaleX(0.94);transform-origin:0 0">0 of 550 Messages</div>
<div class="a" style="left:487px;top:793px;width:1px;height:18px;background:#3c3c3c"></div>
<div class="a" style="left:492px;top:791px;width:22px;height:22px;background:#2b2b2b;border:1px solid #7563e8"></div>
<svg style="left:495px;top:794px" width="16" height="16" viewBox="0 0 16 16"><path d="M6 4.6H15L11.5 9V14H7.5V9L5 6" fill="none" stroke="#e8e8e8" stroke-width="1.1"/><circle cx="3.5" cy="4" r="3.2" fill="#f04e5e"/><circle cx="3.5" cy="4" r="1.1" fill="#111"/></svg>
<div class="a" style="left:518px;top:793px;width:1px;height:18px;background:#3c3c3c"></div>
<div class="a" style="left:525px;top:792px;width:150px;height:20px;background:#333333"></div>
<div class="t" style="left:529px;top:796px;color:#f0f0f0;transform:scaleX(0.97);transform-origin:0 0">Build + IntelliSense</div>
<svg style="left:664px;top:801px" width="6" height="3" viewBox="0 0 6 3"><path d="M0 0H6L3 3Z" fill="#d0d0d0"/></svg>
<div class="a" style="left:30px;top:816px;width:1px;height:19px;background:#3c3c3c"></div>
<div class="a" style="left:55px;top:816px;width:1px;height:19px;background:#3c3c3c"></div>
<div class="a" style="left:105px;top:816px;width:1px;height:19px;background:#3c3c3c"></div>
<svg style="left:45px;top:818px" width="6" height="6" viewBox="0 0 6 6"><path d="M0 0.5H6M4.5 0V6M2 2.5H6M2 4.5H6" stroke="#c0c0c0" stroke-width="1"/></svg>
<div class="t" style="left:59px;top:819px;color:#e0e0e0">Code</div>
<div class="t" style="left:109px;top:819px;color:#e0e0e0">Description</div>
<div class="a" style="left:4px;top:835px;width:1250px;height:1px;background:#3c3c3c"></div>
<svg style="left:35px;top:839px" width="14" height="14" viewBox="0 0 14 14"><circle cx="7" cy="7" r="6.5" fill="#f05a66"/><path d="M3.8 3.8L10.2 10.2M10.2 3.8L3.8 10.2" stroke="#111111" stroke-width="1.3"/></svg>
<div class="t" style="left:59px;top:840px;color:#6cb4f0;letter-spacing:-0.6px">CS0115</div>
<div class="t" style="left:109px;top:840px;color:#ebebeb;letter-spacing:-0.08px">&#x27;ImposterExtra.AfterRender(int, int, ConsoleChar, ex3DSprite2, ScreenBuffer)&#x27;: no suitable method found to override</div>
<svg style="left:35px;top:859px" width="14" height="14" viewBox="0 0 14 14"><circle cx="7" cy="7" r="6.5" fill="#f05a66"/><path d="M3.8 3.8L10.2 10.2M10.2 3.8L3.8 10.2" stroke="#111111" stroke-width="1.3"/></svg>
<div class="t" style="left:59px;top:860px;color:#6cb4f0;letter-spacing:-0.6px">CS0246</div>
<div class="t" style="left:109px;top:860px;color:#ebebeb;letter-spacing:-0.08px">The type or namespace name &#x27;CC_Blend&#x27; could not be found (are you missing a using directive or an assembly reference?)</div>
<svg style="left:35px;top:879px" width="14" height="14" viewBox="0 0 14 14"><circle cx="7" cy="7" r="6.5" fill="#f05a66"/><path d="M3.8 3.8L10.2 10.2M10.2 3.8L3.8 10.2" stroke="#111111" stroke-width="1.3"/></svg>
<div class="t" style="left:59px;top:880px;color:#6cb4f0;letter-spacing:-0.6px">CS0246</div>
<div class="t" style="left:109px;top:880px;color:#ebebeb;letter-spacing:-0.08px">The type or namespace name &#x27;MissileWeaponVFXConfiguration&#x27; could not be found (are you missing a using directive or an assembly reference?)</div>
<svg style="left:35px;top:899px" width="14" height="14" viewBox="0 0 14 14"><circle cx="7" cy="7" r="6.5" fill="#f05a66"/><path d="M3.8 3.8L10.2 10.2M10.2 3.8L3.8 10.2" stroke="#111111" stroke-width="1.3"/></svg>
<div class="t" style="left:59px;top:900px;color:#6cb4f0;letter-spacing:-0.6px">CS0508</div>
<div class="t" style="left:109px;top:900px;color:#ebebeb;letter-spacing:-0.08px">&#x27;WaveCollapseFastModel.GetResult()&#x27;: return type must be &#x27;Color32[]&#x27; to match overridden member &#x27;WaveCollapseFastModelBase.GetResult()&#x27;</div>
<svg style="left:35px;top:926px" width="14" height="14" viewBox="0 0 14 14"><circle cx="7" cy="7" r="6.5" fill="#f05a66"/><path d="M3.8 3.8L10.2 10.2M10.2 3.8L3.8 10.2" stroke="#111111" stroke-width="1.3"/></svg>
<div class="t" style="left:59px;top:927px;color:#6cb4f0;letter-spacing:-0.6px">CS1069</div>
<div class="t" style="left:109px;top:919px;color:#ebebeb;letter-spacing:-0.08px">The type name &#x27;CompilerErrorCollection&#x27; could not be found in the namespace &#x27;System.CodeDom.Compiler&#x27;. This type has been forwarded to assembly &#x27;System.CodeDom, Version=0.0.0.0, Culture=neutral, PublicKeyToken=cc7b13ffcd2ddd51&#x27;</div>
<div class="t" style="left:109px;top:935px;color:#ebebeb;letter-spacing:-0.08px">reference to that assembly.</div>
<svg style="left:35px;top:960px" width="14" height="14" viewBox="0 0 14 14"><circle cx="7" cy="7" r="6.5" fill="#f05a66"/><path d="M3.8 3.8L10.2 10.2M10.2 3.8L3.8 10.2" stroke="#111111" stroke-width="1.3"/></svg>
<div class="t" style="left:59px;top:961px;color:#6cb4f0;letter-spacing:-0.6px">CS1069</div>
<div class="t" style="left:109px;top:953px;color:#ebebeb;letter-spacing:-0.08px">The type name &#x27;CompilerErrorCollection&#x27; could not be found in the namespace &#x27;System.CodeDom.Compiler&#x27;. This type has been forwarded to assembly &#x27;System.CodeDom, Version=0.0.0.0, Culture=neutral, PublicKeyToken=cc7b13ffcd2ddd51&#x27;</div>
<div class="t" style="left:109px;top:969px;color:#ebebeb;letter-spacing:-0.08px">reference to that assembly.</div>
<svg style="left:35px;top:987px" width="14" height="14" viewBox="0 0 14 14"><circle cx="7" cy="7" r="6.5" fill="#f05a66"/><path d="M3.8 3.8L10.2 10.2M10.2 3.8L3.8 10.2" stroke="#111111" stroke-width="1.3"/></svg>
<div class="t" style="left:59px;top:988px;color:#6cb4f0;letter-spacing:-0.6px">CS0246</div>
<div class="t" style="left:109px;top:988px;color:#ebebeb;letter-spacing:-0.08px">The type or namespace name could not be found</div>
</body></html>
